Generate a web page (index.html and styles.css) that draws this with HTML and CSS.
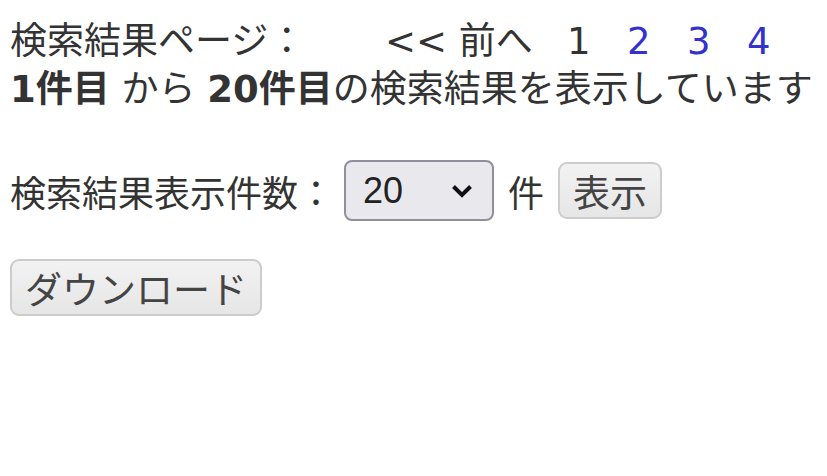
FILE: index.html
```html
<!DOCTYPE html>
<html lang="ja">
<head>
<meta charset="utf-8">
<link rel="stylesheet" href="styles.css">
</head>
<body>
<div class="pager">
  <span class="label">検索結果ページ：</span>
  <span class="prev">&lt;&lt; 前へ</span>
  <span class="num current">1</span>
  <a class="num" href="#">2</a>
  <a class="num" href="#">3</a>
  <a class="num" href="#">4</a>
</div>
<div class="range"><b>1件目</b> から <b>20件目</b>の検索結果を表示しています</div>
<form class="count">
  <span class="count-label">検索結果表示件数：</span>
  <span class="select">20<svg class="chev" viewBox="0 0 22 14" width="22" height="14"><path d="M2.5 2.5 L11 11 L19.5 2.5" fill="none" stroke="#111" stroke-width="4"/></svg></span>
  <span class="unit">件</span>
  <span class="btn">表示</span>
</form>
<div class="dl"><span class="btn big">ダウンロード</span></div>
</body>
</html>
```
FILE: styles.css
```css
html, body {
  margin: 0;
  background: #fff;
}
body {
  padding: 18px 10px;
  color: #333;
  font-family: "DejaVu Sans", "Noto Sans CJK JP", sans-serif;
  font-size: 37px;
}
.pager {
  display: flex;
  align-items: baseline;
  line-height: 48px;
  height: 48px;
}
.label { width: 375px; }
.prev { width: 182px; }
.num { width: 60px; color: #333; text-decoration: none; }
a.num { color: #3333cc; }
.range {
  line-height: 48px;
  height: 48px;
  white-space: nowrap;
}
.range b { font-weight: 700; }
.count {
  display: flex;
  align-items: center;
  margin: 46px 0 0;
  font-size: 36px;
}
.count-label { margin-right: 10px; }
.select {
  display: flex;
  align-items: center;
  justify-content: space-between;
  box-sizing: border-box;
  width: 150px;
  height: 61px;
  padding: 0 19px 0 17px;
  border: 2px solid #8f8f9d;
  border-radius: 8px;
  background: #e9e9ed;
  font-family: "Liberation Sans", Arial, sans-serif;
  font-size: 36px;
  color: #222;
}
.unit { margin: 0 14px 0 14px; }
.btn {
  display: inline-flex;
  align-items: center;
  justify-content: center;
  box-sizing: border-box;
  height: 57px;
  padding: 0 13px;
  border: 2px solid #ccc;
  border-radius: 9px;
  background: linear-gradient(#f2f2f2, #e6e6e6);
  color: #444;
  font-size: 37px;
}
.dl { margin-top: 38px; }
.btn.big { width: 252px; }
```
